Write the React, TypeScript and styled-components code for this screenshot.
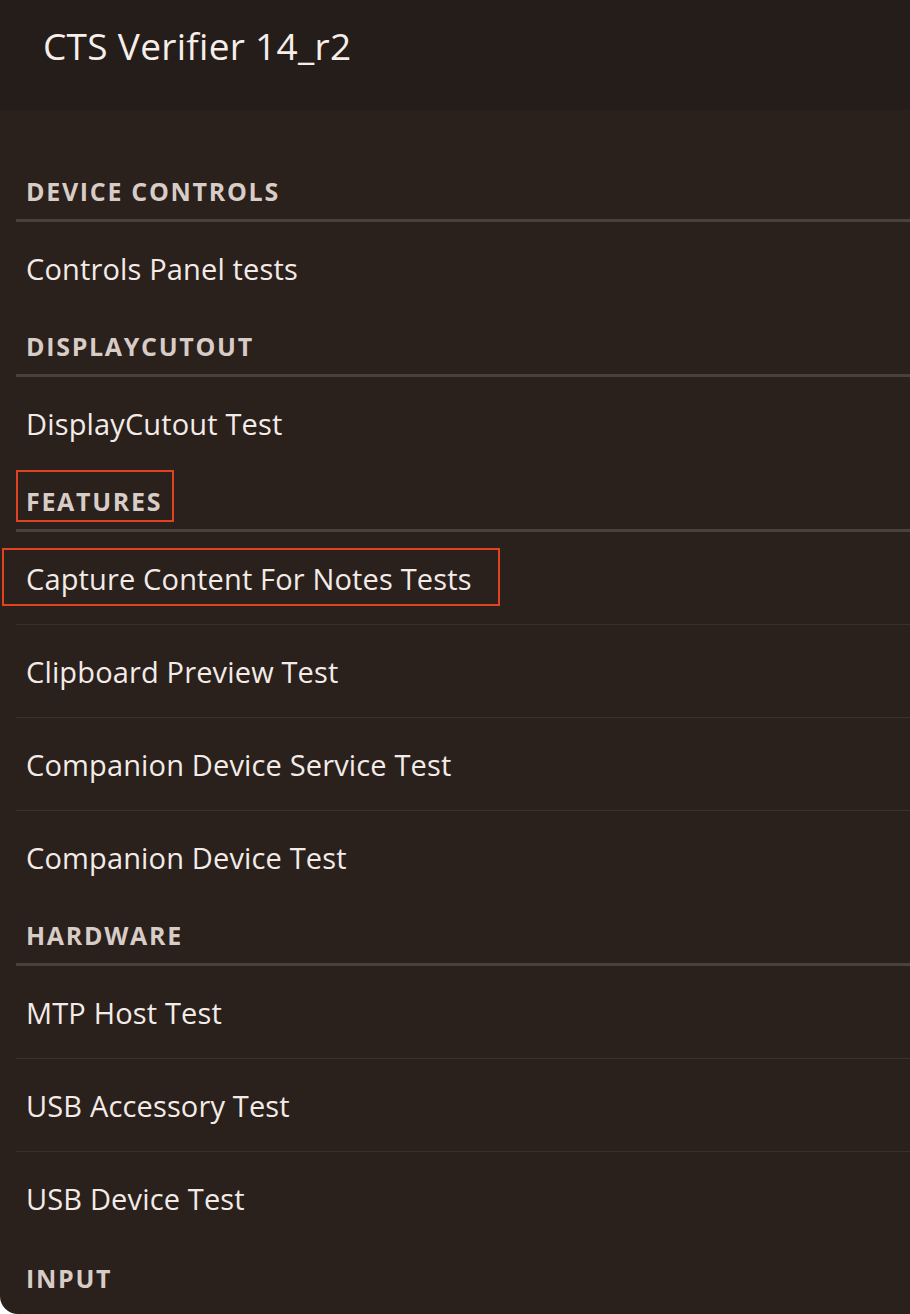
import styled, { createGlobalStyle } from "styled-components";

const Global = createGlobalStyle`
    html, body {
        margin: 0;
        padding: 0;
        background: #ffffff;
    }
    body {
        font-family: "Open Sans", Roboto, "Noto Sans", sans-serif;
    }
`;

const Screen = styled.div`
    width: 910px;
    height: 1314px;
    background: #2a201c;
    border-bottom-left-radius: 18px;
    overflow: hidden;
`;

const AppBar = styled.header`
    height: 110px;
    background: #241d1a;
    display: flex;
    align-items: flex-start;
    padding: 20px 0 0 43px;
    box-sizing: border-box;
`;

const Title = styled.h1`
    margin: 0;
    font-size: 37px;
    font-weight: 400;
    color: #f7eeea;
    letter-spacing: 0.3px;
`;

const List = styled.div`
    margin-top: 49px;
    display: flex;
    flex-direction: column;
`;

const SectionHeader = styled.div<{ $bare?: boolean }>`
    position: relative;
    height: 63px;
    display: flex;
    align-items: center;
    padding: 4px 0 0 10px;
    box-sizing: border-box;
    margin-left: 16px;
    border-bottom: ${p => (p.$bare ? "none" : "3px solid #4a413d")};
    font-size: 25px;
    font-weight: 700;
    letter-spacing: 1.7px;
    color: #d8ccc6;
    text-transform: uppercase;
`;

const Item = styled.div<{ $last?: boolean }>`
    position: relative;
    height: 92px;
    display: flex;
    align-items: center;
    margin-left: 16px;
    padding-left: 10px;
    border-bottom: ${p => (p.$last ? "none" : "1px solid #3a302c")};
    font-size: 29px;
    letter-spacing: 0.15px;
    color: #f3ebe7;
`;

const Highlight = styled.span<{ $top: number; $left: number; $width: number; $height: number }>`
    position: absolute;
    top: ${p => p.$top}px;
    left: ${p => p.$left}px;
    width: ${p => p.$width}px;
    height: ${p => p.$height}px;
    border: 2px solid #e2421f;
    box-sizing: border-box;
    pointer-events: none;
`;

interface ISection {
    name: string;
    items: string[];
}

const sections: ISection[] = [
    { name: "Device Controls", items: ["Controls Panel tests"] },
    { name: "DisplayCutout", items: ["DisplayCutout Test"] },
    {
        name: "Features",
        items: [
            "Capture Content For Notes Tests",
            "Clipboard Preview Test",
            "Companion Device Service Test",
            "Companion Device Test",
        ],
    },
    { name: "Hardware", items: ["MTP Host Test", "USB Accessory Test", "USB Device Test"] },
    { name: "Input", items: [] },
];

function App() {
    return (
        <>
            <Global />
            <Screen>
                <AppBar>
                    <Title>CTS Verifier 14_r2</Title>
                </AppBar>
                <List>
                    {sections.map(section => (
                        <div key={section.name}>
                            <SectionHeader $bare={section.items.length === 0}>
                                {section.name}
                                {section.name === "Features" && (
                                    <Highlight $top={1} $left={0} $width={158} $height={52} />
                                )}
                            </SectionHeader>
                            {section.items.map((item, i) => (
                                <Item key={item} $last={i === section.items.length - 1}>
                                    {item}
                                    {item === "Capture Content For Notes Tests" && (
                                        <Highlight $top={16} $left={-14} $width={498} $height={58} />
                                    )}
                                </Item>
                            ))}
                        </div>
                    ))}
                </List>
            </Screen>
        </>
    );
}

export default App;
